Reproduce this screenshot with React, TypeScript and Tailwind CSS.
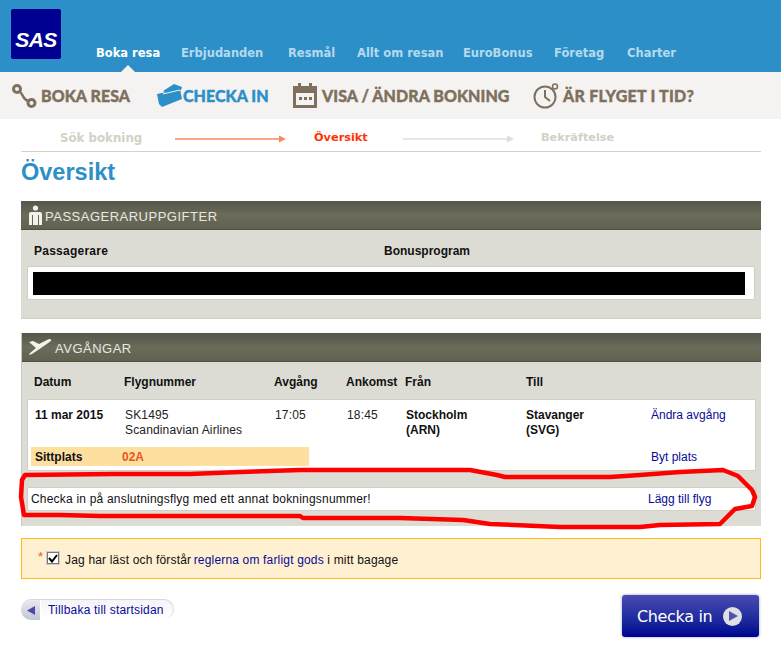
import React from "react";

const nav = [
  { t: "Boka resa", w: "w-[62px]", c: "text-white" },
  { t: "Erbjudanden", w: "w-[84px]", c: "text-[#b4daee]" },
  { t: "Resmål", w: "w-[46px]", c: "text-[#b4daee]" },
  { t: "Allt om resan", w: "w-[83px]", c: "text-[#b4daee]" },
  { t: "EuroBonus", w: "w-[68px]", c: "text-[#b4daee]" },
  { t: "Företag", w: "w-[50px]", c: "text-[#b4daee]" },
  { t: "Charter", w: "w-[50px]", c: "text-[#b4daee]" },
];

const RouteIcon = () => (
  <svg width="25" height="26" viewBox="0 0 25 26" fill="none" stroke="#7f705e">
    <circle cx="5" cy="6" r="3.5" strokeWidth="3" />
    <circle cx="19.5" cy="20" r="3.5" strokeWidth="3" />
    <path d="M8 9 C12 12 10 16 16 18" strokeWidth="2.5" />
  </svg>
);
const TicketIcon = () => (
  <svg width="26" height="24" viewBox="0 0 26 24">
    <path d="M6 7 L17 0 L25 3 L24 6 L10 9 Z" fill="#2d8fc7" />
    <path d="M0 10 L23 5 L25 15 L5 23 L2 20 Z" fill="#2d8fc7" />
    <path d="M6 10 L23 6" stroke="#f5f3f1" strokeWidth="1" />
  </svg>
);
const CalIcon = () => (
  <svg width="24" height="25" viewBox="0 0 24 25">
    <rect x="1.5" y="4.5" width="21" height="19" fill="none" stroke="#7f705e" strokeWidth="3" />
    <rect x="1" y="4" width="22" height="6" fill="#7f705e" />
    <rect x="5" y="0" width="3" height="6" fill="#7f705e" />
    <rect x="16" y="0" width="3" height="6" fill="#7f705e" />
    <rect x="6" y="14" width="3" height="3" fill="#7f705e" />
    <rect x="11" y="14" width="3" height="3" fill="#7f705e" />
    <rect x="16" y="14" width="3" height="3" fill="#7f705e" />
  </svg>
);
const ClockIcon = () => (
  <svg width="26" height="26" viewBox="0 0 26 26" fill="none" stroke="#7f705e">
    <circle cx="12" cy="14" r="10.5" strokeWidth="2" />
    <path d="M12 7 L12 14 L17 18" strokeWidth="2" />
    <circle cx="22" cy="3.5" r="2.5" strokeWidth="1.5" />
  </svg>
);

const Arrow = ({ color }: { color: string }) => (
  <svg width="111" height="8" viewBox="0 0 111 8">
    <path d="M0 4 H104" stroke={color} strokeWidth="1.6" />
    <path d="M104 0.5 L111 4 L104 7.5 Z" fill={color} />
  </svg>
);

const PersonIcon = () => (
  <svg width="15" height="20" viewBox="0 0 15 20">
    <circle cx="7.5" cy="3" r="2.6" fill="#f2f2ea" />
    <path d="M1 20 V9 Q1 7 3 7 H12 Q14 7 14 9 V20 H11 V10 H10 V20 H5 V10 H4 V20 Z" fill="#f2f2ea" />
  </svg>
);
const PlaneIcon = () => (
  <svg width="23" height="16" viewBox="0 0 23 16">
    <path d="M0 3 L4 2 L10 5 L20 0 Q23 0 22 2 L12 9 L3 15 L0 16 L1 14 L7 9 Z" fill="#f2f2ea" />
  </svg>
);

const head = "text-[12px] font-bold text-[#111] leading-[15px]";
const body = "text-[12px] text-[#222] leading-[15px] tracking-[0.15px]";
const link = "text-[12px] text-[#0a0a96] leading-[15px]";

const PanelHead = ({ icon, title, gap }: { icon: React.ReactNode; title: string; gap: string }) => (
  <div className={`h-[29px] pl-[7px] flex items-center ${gap} bg-gradient-to-b from-[#55554a] via-[#6b6b5a] to-[#62614f] border-b border-[#50503f]`}>
    {icon}
    <span className="text-[13px] text-[#e8e8e0] leading-none tracking-[0.5px] pt-[3px]">{title}</span>
  </div>
);

export default function App() {
  return (
    <div className="relative w-[781px] h-[658px] overflow-hidden bg-white font-['Liberation_Sans',Arial,sans-serif]">
      {/* Top bar */}
      <header className="relative h-[72px] bg-[#2d8fc7] pl-[11px] flex items-start">
        <div className="mt-[9px] w-[50px] h-[50px] rounded-[2px] bg-[#000090] flex items-center justify-center pt-[11px]">
          <span className="text-white font-bold italic text-[21px] leading-none tracking-[-0.5px]">SAS</span>
        </div>
        <nav className="ml-[35px] mt-[45px] flex gap-[23px] font-['DejaVu_Sans',sans-serif] font-bold text-[11.5px] leading-[16px]">
          {nav.map((n) => (
            <span key={n.t} className={`${n.w} ${n.c} whitespace-nowrap`}>{n.t}</span>
          ))}
        </nav>
        <div className="absolute left-[121px] top-[65px] w-0 h-0 border-x-[7px] border-x-transparent border-b-[7px] border-b-[#f5f3f1]" />
      </header>

      {/* Sub bar */}
      <div className="h-[47px] bg-[#f5f3f1] flex items-center pl-[12px] font-['Lato',sans-serif] font-black text-[16px] tracking-[0.05px] [-webkit-text-stroke:0.4px_#7f705e] text-[#7f705e] whitespace-nowrap">
        <RouteIcon />
        <span className="ml-[4px] w-[89px]">BOKA RESA</span>
        <span className="ml-[27px]"><TicketIcon /></span>
        <span className="w-[86px] text-[#2d8fc7] [-webkit-text-stroke:0.4px_#2d8fc7]">CHECKA IN</span>
        <span className="ml-[24px]"><CalIcon /></span>
        <span className="ml-[5px] w-[188px]">VISA / ÄNDRA BOKNING</span>
        <span className="ml-[23px]"><ClockIcon /></span>
        <span className="ml-[4px] tracking-[0.25px]">ÄR FLYGET I TID?</span>
      </div>

      <main className="px-[21px] w-[782px]">
        {/* Steps */}
        <div className="h-[33px] border-b border-[#d5d3c8] flex items-center font-['DejaVu_Sans',sans-serif] font-bold text-[11.3px] whitespace-nowrap pt-[7px] w-[740px]">
          <span className="ml-[39px] w-[115px] text-[#d2d1c5] text-[11.8px]">Sök bokning</span>
          <Arrow color="#f58a60" />
          <span className="ml-[28px] w-[89px] text-[#ff3300]">Översikt</span>
          <Arrow color="#dfdcdc" />
          <span className="ml-[27px] text-[#d2d1c5]">Bekräftelse</span>
        </div>

        <h1 className="mt-[6px] text-[23.5px] font-bold leading-[28px] text-[#2d8fc7]">Översikt</h1>

        {/* Passengers */}
        <section className="mt-[15px] w-[740px] bg-[#dcdcd4] h-[118px] border-b border-[#d0d0c6]">
          <PanelHead icon={<PersonIcon />} title="PASSAGERARUPPGIFTER" gap="gap-[2px]" />
          <div className="flex px-[13px] pt-[14px] h-[36px]">
            <span className={`${head} w-[350px] tracking-[0.25px]`}>Passagerare</span>
            <span className={head}>Bonusprogram</span>
          </div>
          <div className="mx-[6px] h-[34px] bg-white border border-[#cfcfc6] rounded-[2px] pl-[5px] py-[5px]">
            <div className="h-[23px] w-[712px] bg-black" />
          </div>
        </section>

        {/* Departures */}
        <section className="mt-[14px] w-[740px] bg-[#dcdcd4] h-[193px] border-l border-[#c8c8be]">
          <PanelHead icon={<PlaneIcon />} title="AVGÅNGAR" gap="gap-[3px]" />
          <div className="grid grid-cols-[90px_150px_72px_59px_121px_1fr] pl-[12px] pt-[13px] h-[37px]">
            <span className={head}>Datum</span>
            <span className={head}>Flygnummer</span>
            <span className={head}>Avgång</span>
            <span className={head}>Ankomst</span>
            <span className={head}>Från</span>
            <span className={head}>Till</span>
          </div>
          <div className="mx-[5px] h-[72px] bg-white border border-[#cfcfc6] rounded-[2px]">
            <div className="grid grid-cols-[90px_150px_72px_59px_120px_125px_1fr] pl-[7px] pt-[8px] h-[47px]">
              <span className={head}>11 mar 2015</span>
              <span className={body}>SK1495<br />Scandinavian Airlines</span>
              <span className={body}>17:05</span>
              <span className={body}>18:45</span>
              <span className={head}>Stockholm<br />(ARN)</span>
              <span className={head}>Stavanger<br />(SVG)</span>
              <span className={link}>Ändra avgång</span>
            </div>
            <div className="flex items-center">
              <div className="ml-[3px] w-[278px] h-[19px] bg-[#fde0a0] flex items-center pl-[4px] pt-[1px]">
                <span className={`${head} w-[87px]`}>Sittplats</span>
                <span className="text-[12px] font-bold text-[#e8581c]">02A</span>
              </div>
              <span className={`${link} ml-[342px] pt-[2px]`}>Byt plats</span>
            </div>
          </div>
          <div className="mx-[5px] mt-[16px] h-[24px] bg-white border border-[#cfcfc6] rounded-[2px] flex items-center pl-[3px]">
            <span className="text-[12px] text-[#111] w-[617px] tracking-[0.2px] whitespace-nowrap">Checka in på anslutningsflyg med ett annat bokningsnummer!</span>
            <span className={link}>Lägg till flyg</span>
          </div>
        </section>

        {/* Consent */}
        <div className="mt-[12px] w-[740px] h-[41px] bg-[#fef0d0] border border-[#ffbb11] flex items-center pl-[16px] pt-[2px]">
          <span className="text-[#e8581c] text-[13px] leading-none -mt-[6px] mr-[4px]">*</span>
          <span className="w-[12px] h-[12px] -mt-[3px] bg-white border border-[#777] outline outline-1 outline-[#ccc] flex items-center justify-center">
            <svg width="10" height="9" viewBox="0 0 10 9">
              <path d="M1 4 L4 7.5 L9 1" fill="none" stroke="#000" strokeWidth="2" />
            </svg>
          </span>
          <span className="ml-[6px] text-[12px] text-[#111] tracking-[0.17px] whitespace-nowrap">
            Jag har läst och förstår <span className="text-[#0a0a96] -ml-[1px]">reglerna om farligt gods</span> i mitt bagage
          </span>
        </div>

        {/* Footer */}
        <div className="flex justify-between items-start w-[738px] mt-[16px]">
          <div className="mt-[4px] h-[20px] w-[153px] flex rounded-full border-t border-r border-[#d8d8e0] bg-gradient-to-b from-[#f4f4f8] to-white">
            <span className="w-[20px] h-[20px] rounded-l-full bg-gradient-to-b from-[#e8e8ee] to-[#c6c6d4] border-r border-white flex items-center justify-center">
              <svg width="8" height="9" viewBox="0 0 8 9"><path d="M8 0 V9 L0 4.5 Z" fill="#4a4aa8" /></svg>
            </span>
            <span className="ml-[7px] text-[12px] leading-[21px] text-[#0a0a96] tracking-[0.2px] whitespace-nowrap">Tillbaka till startsidan</span>
          </div>
          <div className="w-[137px] h-[42px] rounded-[3px] bg-gradient-to-b from-[#4a4ab0] to-[#00008f] shadow-[0_0_3px_#9a9ad0] flex items-center pl-[15px]">
            <span className="text-white text-[16px] font-['DejaVu_Sans',sans-serif] leading-none w-[86px] whitespace-nowrap tracking-[-0.35px] pt-[1px]">Checka in</span>
            <span className="w-[19px] h-[19px] rounded-full bg-[#dfdfe6] flex items-center justify-center pl-[2px]">
              <svg width="9" height="10" viewBox="0 0 9 10"><path d="M0 0 L9 5 L0 10 Z" fill="#5252ad" /></svg>
            </span>
          </div>
        </div>
      </main>

      {/* Hand-drawn red outline on top of the screenshot */}
      <svg className="absolute left-0 top-0 pointer-events-none" width="781" height="658" viewBox="0 0 781 658" fill="none">
        <path
          d="M22 480 L25 475 L113 474 L190 474 L240 472 L300 470 L424 470 L470 470 L497 475 L505 477 L610 477 L640 475 L680 472 L723 470 L738 476 L752 490 L755 497 L752 506 L735 509 L727 517 L720 524 L660 525 L640 527 L560 527 L490 524 L463 520 L400 518 L303 518 L300 516 L200 516 L100 516 L60 515 L24 515 L21 497 Z"
          stroke="#ff0000"
          strokeWidth="4.5"
          strokeLinejoin="round"
        />
      </svg>
    </div>
  );
}
